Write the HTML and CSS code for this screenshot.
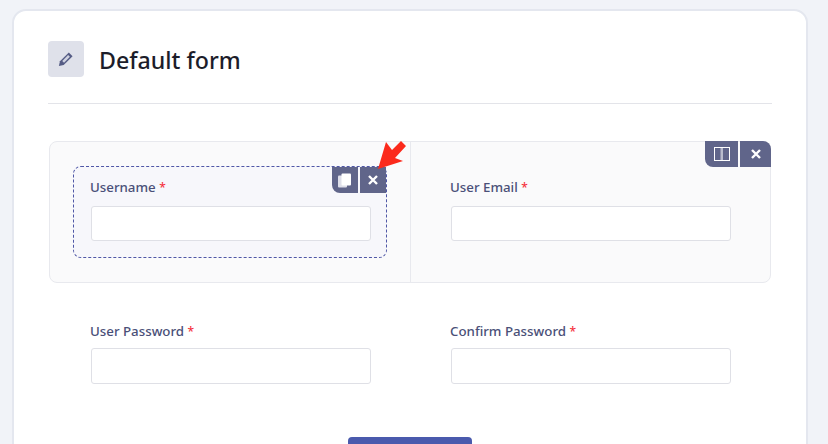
FILE: index.html
```html
<!DOCTYPE html>
<html>
<head>
<meta charset="UTF-8" />
<title>Default form</title>
<link rel="stylesheet" href="styles.css">
</head>
<body>
<div class="card">
	<div class="card-head">
		<div class="head-icon">
			<svg width="16" height="16" viewBox="0 0 18 18"><path d="M12.2 1.6l4.2 4.2-10 10-5.4 1.2 1.2-5.4z" fill="#555c85"/><path d="M11.4 4.6l2 2-6.6 6.6-2-2z" fill="#cfd2e0"/></svg>
		</div>
		<h1 class="title">Default form</h1>
	</div>

	<div class="form-row boxed">
		<div class="row-tools">
			<span class="tool split">
				<svg width="16" height="14" viewBox="0 0 16 14"><rect x="0.5" y="0.5" width="15" height="13" fill="none" stroke="#fff"/><rect x="6.5" y="1" width="2.5" height="12" fill="#b9bccd"/></svg>
			</span>
			<span class="tool close-row">
				<svg width="10" height="10" viewBox="0 0 10 10"><path d="M1 1l8 8M9 1l-8 8" stroke="#fff" stroke-width="2.4"/></svg>
			</span>
		</div>
		<div class="col col-first">
			<div class="field selected">
				<div class="field-tools">
					<span class="tool copy">
						<svg width="14" height="15" viewBox="0 0 14 15"><rect x="0" y="2.5" width="9" height="12" rx="1" fill="#dfe0ea"/><rect x="3.5" y="0.5" width="9.5" height="12" rx="1" fill="#fff"/></svg>
					</span>
					<span class="tool close-field">
						<svg width="10" height="10" viewBox="0 0 10 10"><path d="M1 1l8 8M9 1l-8 8" stroke="#fff" stroke-width="2.4"/></svg>
					</span>
				</div>
				<label class="lbl">Username <span class="req">*</span></label>
				<input class="inp" type="text">
			</div>
		</div>
		<div class="col col-second">
			<label class="lbl">User Email <span class="req">*</span></label>
			<input class="inp" type="text">
		</div>
	</div>

	<div class="form-row plain">
		<div class="col col-left">
			<label class="lbl">User Password <span class="req">*</span></label>
			<input class="inp" type="password">
		</div>
		<div class="col col-right">
			<label class="lbl">Confirm Password <span class="req">*</span></label>
			<input class="inp" type="password">
		</div>
	</div>

	<div class="submit-wrap"><div class="submit"></div></div>

	<svg class="arrow" width="32" height="32" viewBox="0 0 32 32"><path d="M3 29L11 2l6 8 9-9 5 5-11 12 8 3z" fill="#fb2a1c"/></svg>
</div>
</body>
</html>
```

FILE: styles.css
```css
html, body {
	height: 444px;
	overflow: hidden;
}

body {
	margin: 0;
	background-color: #f1f3f8;
	font-family: "Noto Sans", "Open Sans", sans-serif;
	padding: 9px 20px 0 12px;
}

.card {
	position: relative;
	background: #fff;
	border: 2px solid #e4e7ef;
	border-radius: 14px;
	padding: 30px 34px 0 34px;
	height: 500px;
}

.card-head {
	display: flex;
	align-items: center;
	gap: 15px;
	padding-bottom: 26px;
	border-bottom: 1px solid #e3e4e9;
	margin-bottom: 37px;
}

.head-icon {
	width: 36px;
	height: 36px;
	border-radius: 4px;
	background: #dfe1ea;
	display: flex;
	align-items: center;
	justify-content: center;
}

.title {
	margin: 2px 0 0 0;
	font-size: 23.2px;
	line-height: 34px;
	font-weight: 500;
	color: #1c1d2a;
}

.form-row {
	display: flex;
	margin: 0 1px;
	position: relative;
}

.boxed {
	background: #fafafb;
	border: 1px solid #e8e9ee;
	border-radius: 8px;
	margin-bottom: 40px;
}

.col {
	flex: 1;
}

.col-first {
	flex: none;
	width: 361px;
	box-sizing: border-box;
	padding: 24px 23px 24px 23px;
	border-right: 1px solid #e8e9ee;
}

.col-second {
	padding: 37px 39px 0 40px;
}

.col-left {
	padding: 0 39px 0 42px;
}

.col-right {
	padding: 0 40px 0 41px;
}

.field {
	position: relative;
}

.selected {
	padding: 12px 15px 16px 17px;
	border: 1px dashed #4f57a6;
	border-radius: 8px;
	background: #f7f7fb;
}

.lbl {
	display: block;
	font-size: 13.3px;
	line-height: 16px;
	font-weight: 500;
	color: #4a5078;
	margin: 0 0 10px -1px;
}

.plain .lbl {
	margin-bottom: 8px;
}

.req {
	color: #f5333f;
	font-size: 12px;
}

.inp {
	display: block;
	box-sizing: border-box;
	width: 280px;
	height: 35px;
	background: #fff;
	border: 1px solid #dfe0e6;
	border-radius: 3px;
	padding: 0;
	margin: 0;
}

.plain .inp {
	height: 36px;
}

.field-tools {
	position: absolute;
	top: 0;
	right: 0;
	display: flex;
	gap: 2px;
}

.row-tools {
	position: absolute;
	top: -1px;
	right: -1px;
	display: flex;
	gap: 2px;
}

.tool {
	display: flex;
	align-items: center;
	justify-content: center;
	height: 26px;
	background: #60658a;
}

.split {
	width: 33px;
	border-radius: 0 0 0 8px;
}

.close-row {
	width: 31px;
	border-radius: 0 8px 0 0;
}

.copy {
	width: 26px;
	border-radius: 0 0 0 8px;
}

.close-field {
	width: 26px;
}

.submit-wrap {
	display: flex;
	justify-content: center;
	margin-top: 53px;
}

.submit {
	width: 124px;
	height: 40px;
	background: #4a5aad;
	border-radius: 4px;
}

.arrow {
	position: absolute;
	left: 361px;
	top: 129px;
}
```
